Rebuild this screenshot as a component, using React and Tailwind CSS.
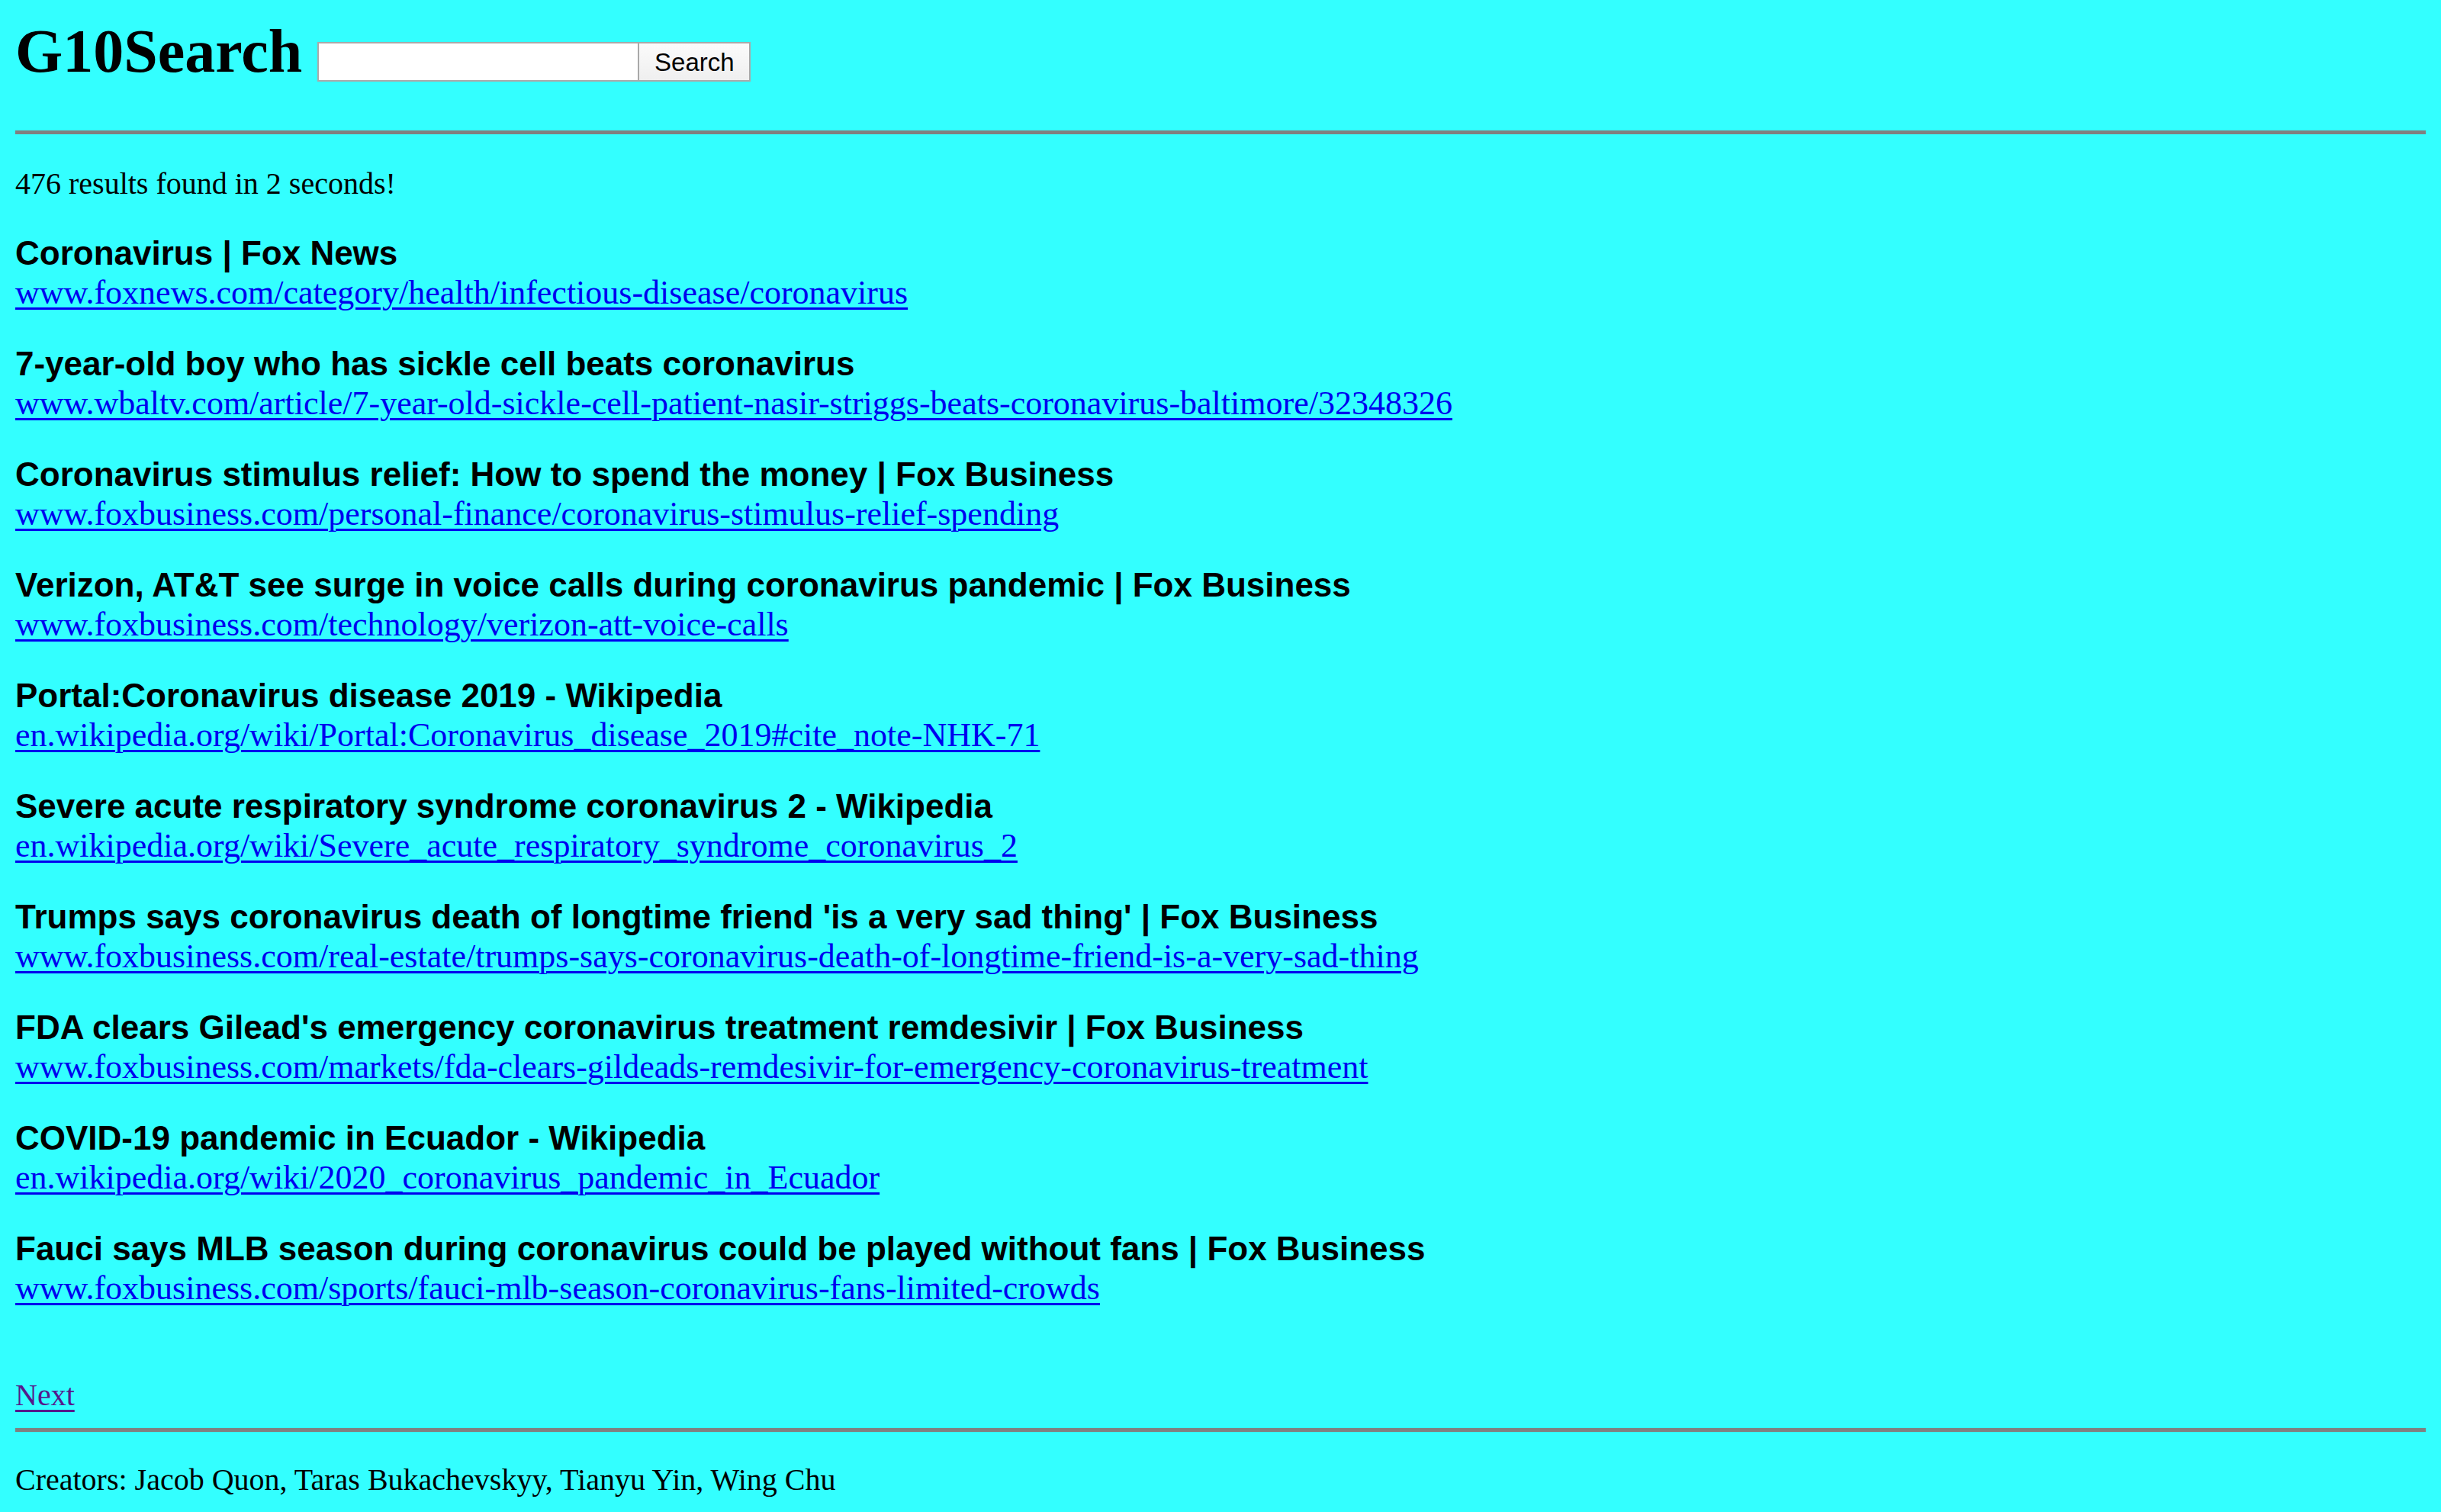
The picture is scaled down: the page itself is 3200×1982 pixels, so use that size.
import React from "react";

const results = [
  ["Coronavirus | Fox News", "www.foxnews.com/category/health/infectious-disease/coronavirus"],
  ["7-year-old boy who has sickle cell beats coronavirus", "www.wbaltv.com/article/7-year-old-sickle-cell-patient-nasir-striggs-beats-coronavirus-baltimore/32348326"],
  ["Coronavirus stimulus relief: How to spend the money | Fox Business", "www.foxbusiness.com/personal-finance/coronavirus-stimulus-relief-spending"],
  ["Verizon, AT&T see surge in voice calls during coronavirus pandemic | Fox Business", "www.foxbusiness.com/technology/verizon-att-voice-calls"],
  ["Portal:Coronavirus disease 2019 - Wikipedia", "en.wikipedia.org/wiki/Portal:Coronavirus_disease_2019#cite_note-NHK-71"],
  ["Severe acute respiratory syndrome coronavirus 2 - Wikipedia", "en.wikipedia.org/wiki/Severe_acute_respiratory_syndrome_coronavirus_2"],
  ["Trumps says coronavirus death of longtime friend 'is a very sad thing' | Fox Business", "www.foxbusiness.com/real-estate/trumps-says-coronavirus-death-of-longtime-friend-is-a-very-sad-thing"],
  ["FDA clears Gilead's emergency coronavirus treatment remdesivir | Fox Business", "www.foxbusiness.com/markets/fda-clears-gildeads-remdesivir-for-emergency-coronavirus-treatment"],
  ["COVID-19 pandemic in Ecuador - Wikipedia", "en.wikipedia.org/wiki/2020_coronavirus_pandemic_in_Ecuador"],
  ["Fauci says MLB season during coronavirus could be played without fans | Fox Business", "www.foxbusiness.com/sports/fauci-mlb-season-coronavirus-fans-limited-crowds"],
];

export default function App() {
  return (
    <div className="min-h-screen bg-[#33ffff] px-[20px] pt-[21px] pb-[20px] font-['Liberation_Serif',serif] text-black">
      <div className="flex items-start">
        <h1 className="m-0 text-[80px] font-bold leading-[92px]">G10Search</h1>
        <div className="ml-[20px] mt-[34px] flex">
          <input
            type="text"
            className="h-[52px] w-[422px] border-2 border-[#a9a9a9] bg-white px-[5px] outline-none"
          />
          <button className="h-[52px] w-[146px] border-2 border-l-0 border-[#a9a9a9] bg-gradient-to-b from-[#fbfbfb] to-[#efefef] font-['Liberation_Sans',sans-serif] text-[33px] leading-none text-black">
            Search
          </button>
        </div>
      </div>
      <div className="mt-[58px] h-[5px] bg-[#808080]" />
      <p className="mt-[42px] text-[40px] leading-[46px]">476 results found in 2 seconds!</p>
      <div className="mt-[42px] flex flex-col gap-[42px]">
        {results.map(([t, u]) => (
          <div key={u} className="flex flex-col">
            <div className="font-['Liberation_Sans',sans-serif] text-[44px] font-bold leading-[52px]">{t}</div>
            <div className="text-[44px] leading-[51px]">
              <a href="#" className="text-[#0000ee] underline decoration-[3px] underline-offset-[5px]">{u}</a>
            </div>
          </div>
        ))}
      </div>
      <div className="mt-[92px] text-[40px] leading-[46px]">
        <a href="#" className="text-[#551a8b] underline decoration-[3px] underline-offset-[6px]">Next</a>
      </div>
      <div className="mt-[20px] h-[5px] bg-[#808080]" />
      <p className="mt-[40px] text-[40px] leading-[46px]">Creators: Jacob Quon, Taras Bukachevskyy, Tianyu Yin, Wing Chu</p>
    </div>
  );
}
